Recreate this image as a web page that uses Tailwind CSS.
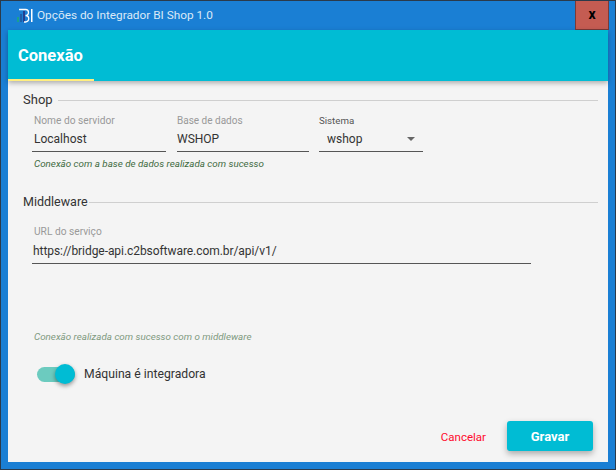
<!DOCTYPE html>
<html lang="pt-BR">
<head>
    <meta charset="UTF-8">
    <title>Opções do Integrador BI Shop 1.0</title>
    <script src="https://cdn.jsdelivr.net/npm/@tailwindcss/browser@4"></script>
</head>
<body class="w-[616px] h-[470px] overflow-hidden font-['Roboto',sans-serif] text-[#333]">
    <div class="w-[616px] h-[470px] flex flex-col bg-[#1a7fd4] border border-[#2b3a4a]">
        <!-- barra de titulo -->
        <div class="h-[29px] flex shrink-0">
            <div class="flex-1 flex items-center pl-[15px]">
                <svg width="18" height="16" viewBox="0 0 18 16" class="mr-[3px]">
                    <rect x="1" y="9" width="2" height="5" fill="#1aa08f"/>
                    <rect x="4" y="6" width="2" height="8" fill="#1f5fa8"/>
                    <rect x="7" y="3" width="2" height="11" fill="#23408f"/>
                    <path d="M3 1.500h6.500a3 3 0 0 1 0 6a3.200 3.200 0 0 1 0 6.500H8" fill="none" stroke="#fff" stroke-width="1.300"/>
                    <rect x="15" y="1" width="1.500" height="13" fill="#fff"/>
                </svg>
                <span class="text-[11.800px] text-[#dbe9f7] pt-[1px]">Opções do Integrador BI Shop 1.0</span>
            </div>
            <div class="w-[34px] mr-[6px] bg-[#c45c52] border border-[#7a3a38] border-t-0 flex items-center justify-center text-[14px] font-bold leading-none text-black pb-[2px]">x</div>
        </div>
        <!-- conteudo -->
        <div class="mx-[7px] h-[432px] flex flex-col bg-[#f4f4f4] relative">
            <div class="h-[51px] shrink-0 bg-[#00bcd4] shadow-[0_2px_5px_rgba(0,0,0,0.3)] flex items-end">
                <div class="w-[86px] h-[51px] border-b-2 border-[#ffee80] pl-[10px] pt-[15px] text-[16.500px] font-bold text-white leading-[22px]">Conexão</div>
            </div>
            <div class="flex items-center gap-[5px] mt-[10px] ml-[15px] mr-[10px] h-[18px]">
                <span class="text-[13px] text-[#333]">Shop</span>
                <div class="flex-1 h-px bg-[#cfcfcf]"></div>
            </div>
            <div class="flex ml-[24px] mt-[5px]">
                <div class="w-[134px] mr-[11px] border-b border-[#555] h-[38px]">
                    <div class="text-[10.200px] leading-[14px] text-[#999] pl-[2px]">Nome do servidor</div>
                    <div class="text-[12px] leading-[18px] mt-[2px] pl-[2px]">Localhost</div>
                </div>
                <div class="w-[132px] mr-[10px] border-b border-[#555] h-[38px]">
                    <div class="text-[10px] leading-[14px] text-[#999]">Base de dados</div>
                    <div class="text-[12px] leading-[18px] mt-[2px]">WSHOP</div>
                </div>
                <div class="w-[104px] border-b border-[#555] h-[38px]">
                    <div class="text-[9.700px] leading-[14px] text-[#555]">Sistema</div>
                    <div class="flex items-center justify-between text-[12px] leading-[18px] mt-[2px] pl-[8px] pr-[8px]">
                        <span>wshop</span>
                        <div class="w-0 h-0 border-x-[4px] border-x-transparent border-t-[4px] border-t-[#666]"></div>
                    </div>
                </div>
            </div>
            <div class="ml-[26px] mt-[5px] text-[9.800px] leading-[14px] italic text-[#3f6b3f]">Conexão com a base de dados realizada com sucesso</div>
            <div class="flex items-center gap-[1px] mt-[22px] ml-[15px] mr-[10px] h-[18px]">
                <span class="text-[12.500px] text-[#333]">Middleware</span>
                <div class="flex-1 h-px bg-[#cfcfcf]"></div>
            </div>
            <div class="ml-[24px] mt-[14px] w-[499px] border-b border-[#555] h-[39px]">
                <div class="text-[10.200px] leading-[14px] text-[#999] pl-[2px]">URL do serviço</div>
                <div class="text-[12px] tracking-[-0.060px] leading-[18px] mt-[3px] pl-[1px]">https://bridge-api.c2bsoftware.com.br/api/v1/</div>
            </div>
            <div class="ml-[26px] mt-[66px] text-[9.800px] leading-[14px] italic text-[#7f9a7f]">Conexão realizada com sucesso com o middleware</div>
            <div class="flex items-center ml-[29px] mt-[19px] h-[22px]">
                <div class="relative w-[38px] h-[15px] rounded-full bg-[#6ccbbf]">
                    <div class="absolute right-0 top-[-3px] w-[20px] h-[20px] rounded-full bg-[#00bcd4] shadow-[0_2px_4px_rgba(0,0,0,0.4)]"></div>
                </div>
                <span class="ml-[9px] text-[12.200px]">Máquina é integradora</span>
            </div>
            <div class="mt-auto flex items-center justify-end mr-[15px] mb-[11px]">
                <span class="text-[11.500px] text-[#ff0a2c] mr-[21px] pt-[3px]">Cancelar</span>
                <div class="w-[86px] h-[30px] pt-[2px] rounded-[3px] bg-[#00bcd4] shadow-[0_3px_6px_rgba(0,0,0,0.3)] flex items-center justify-center text-[13px] font-bold text-white">Gravar</div>
            </div>
        </div>
    </div>
</body>
</html>
